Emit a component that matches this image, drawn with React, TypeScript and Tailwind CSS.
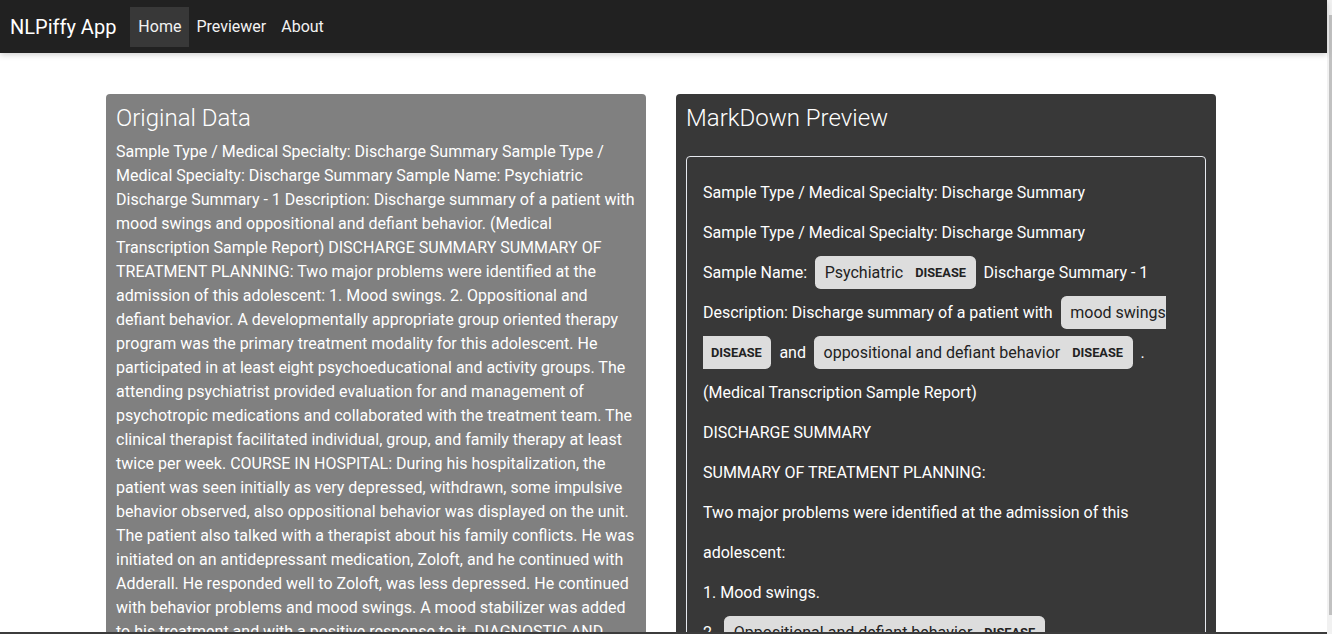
import React from "react";

const original =
  "Sample Type / Medical Specialty: Discharge Summary Sample Type / Medical Specialty: Discharge Summary Sample Name: Psychiatric Discharge Summary - 1 Description: Discharge summary of a patient with mood swings and oppositional and defiant behavior. (Medical Transcription Sample Report) DISCHARGE SUMMARY SUMMARY OF TREATMENT PLANNING: Two major problems were identified at the admission of this adolescent: 1. Mood swings. 2. Oppositional and defiant behavior. A developmentally appropriate group oriented therapy program was the primary treatment modality for this adolescent. He participated in at least eight psychoeducational and activity groups. The attending psychiatrist provided evaluation for and management of psychotropic medications and collaborated with the treatment team. The clinical therapist facilitated individual, group, and family therapy at least twice per week. COURSE IN HOSPITAL: During his hospitalization, the patient was seen initially as very depressed, withdrawn, some impulsive behavior observed, also oppositional behavior was displayed on the unit. The patient also talked with a therapist about his family conflicts. He was initiated on an antidepressant medication, Zoloft, and he continued with Adderall. He responded well to Zoloft, was less depressed. He continued with behavior problems and mood swings. A mood stabilizer was added to his treatment and with a positive response to it. DIAGNOSTIC AND FINAL DIAGNOSIS: Axis I: Mood disorder, not otherwise specified. Oppositional defiant disorder. Attention deficit hyperactivity disorder.";

function Ent({ text, label }: { text: string; label: string }) {
  return (
    <mark className="mx-[0.25em] rounded-[0.35em] bg-[#dddddd] px-[0.6em] py-[0.45em] leading-none text-[#222222]">
      {text}{" "}
      <span className="ml-2 align-middle text-[0.8em] font-bold leading-none">{label}</span>
    </mark>
  );
}

export default function App() {
  return (
    <div className="flex h-[634px] w-[1332px] overflow-hidden bg-white font-['Roboto',sans-serif]">
      <div className="relative flex min-w-0 flex-1 flex-col">
        <nav className="relative z-10 flex h-[53px] shrink-0 items-center bg-[#212121] pl-[10px] shadow-[0_2px_6px_rgba(0,0,0,0.18)]">
          <span className="mr-[14px] text-[20px] text-white">NLPiffy App</span>
          <a className="flex h-[40px] items-center bg-[#383838] px-[8px] text-[16px] text-[#f2f2f2]">Home</a>
          <a className="flex h-[40px] items-center px-[7px] text-[16px] text-[#f2f2f2]">Previewer</a>
          <a className="flex h-[40px] items-center px-[8px] text-[16px] text-[#f2f2f2]">About</a>
        </nav>

        <main className="flex gap-[30px] pl-[106px] pt-[41px]">
          <section className="w-[540px] shrink-0 rounded-[4px] bg-[#808080] px-[10px] pt-[10px] text-white">
            <h4 className="mb-[7px] text-[24px] font-light leading-[1.2]">Original Data</h4>
            <p className="text-[16px] leading-[24px]">{original}</p>
          </section>

          <section className="w-[540px] shrink-0 rounded-[4px] bg-[#383838] px-[10px] pt-[10px] text-white">
            <h4 className="mb-[23px] text-[24px] font-light leading-[1.2]">MarkDown Preview</h4>
            <div className="rounded-[4px] border border-[#e6e9ef] p-4 text-[16px] leading-[2.5]">
              Sample Type / Medical Specialty: Discharge Summary
              <br />
              Sample Type / Medical Specialty: Discharge Summary
              <br />
              Sample Name: <Ent text="Psychiatric" label="DISEASE" /> Discharge Summary - 1
              <br />
              Description: Discharge summary of a patient with <Ent text="mood swings" label="DISEASE" /> and{" "}
              <Ent text="oppositional and defiant behavior" label="DISEASE" /> .
              <br />
              (Medical Transcription Sample Report)
              <br />
              DISCHARGE SUMMARY
              <br />
              SUMMARY OF TREATMENT PLANNING:
              <br />
              Two major problems were identified at the admission of this adolescent:
              <br />
              1. Mood swings.
              <br />
              2. <Ent text="Oppositional and defiant behavior" label="DISEASE" />
              <br />
              A developmentally appropriate group oriented therapy program was the primary treatment modality for this
              adolescent.
            </div>
          </section>
        </main>

        <div className="absolute bottom-0 left-0 right-0 h-[2px] bg-[#3c3c3c]" />
      </div>

      <div className="flex w-[5px] shrink-0 flex-col bg-[#f1f1f1] pl-[2px] pt-[15px]">
        <div className="h-[600px] bg-[#c1c1c1]" />
      </div>
    </div>
  );
}
